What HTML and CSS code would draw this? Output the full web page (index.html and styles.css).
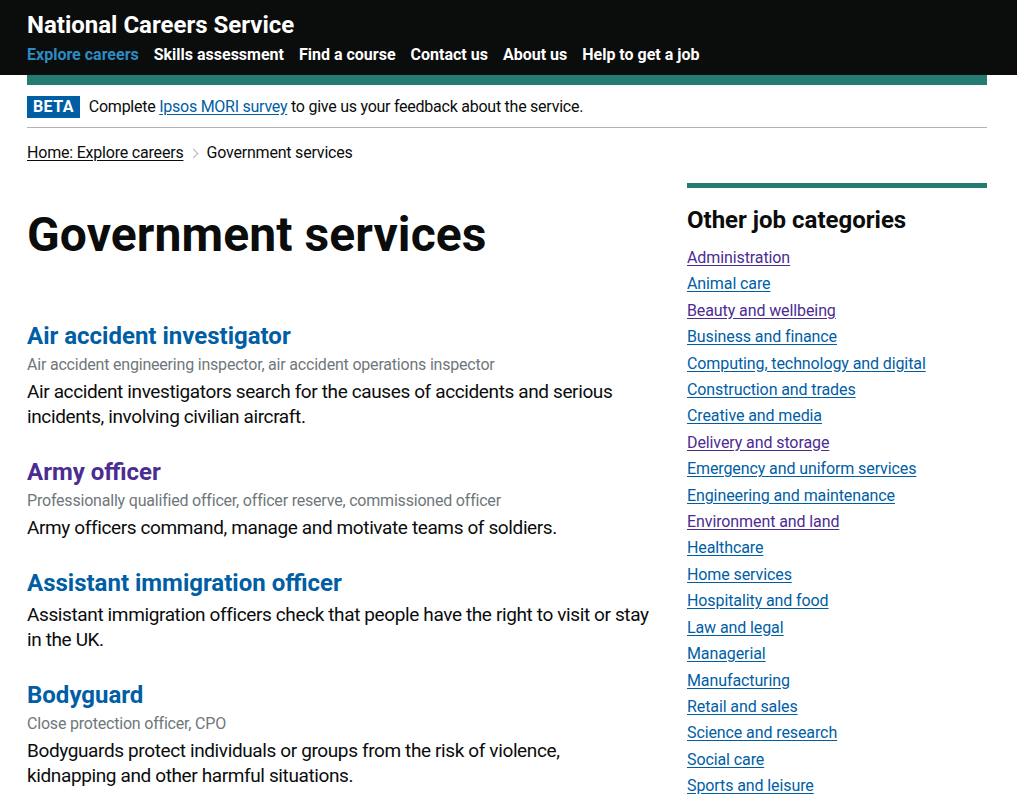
FILE: index.html
```html
<!DOCTYPE html>
<html lang="en">
<head>
<meta charset="utf-8">
<title>Government services - National Careers Service</title>
<link rel="stylesheet" href="styles.css">
</head>
<body>
<header class="site-header">
  <div class="container">
    <a class="service-name" href="#">National Careers Service</a>
    <nav class="nav">
      <a class="nav-link active" href="#">Explore careers</a>
      <a class="nav-link" href="#">Skills assessment</a>
      <a class="nav-link" href="#">Find a course</a>
      <a class="nav-link" href="#">Contact us</a>
      <a class="nav-link" href="#">About us</a>
      <a class="nav-link" href="#">Help to get a job</a>
    </nav>
  </div>
</header>
<div class="container">
  <div class="accent-bar"></div>
  <div class="beta-banner">
    <strong class="tag">BETA</strong>
    <span class="beta-text">Complete <a class="link" href="#">Ipsos MORI survey</a> to give us your feedback about the service.</span>
  </div>
  <div class="breadcrumbs">
    <a class="crumb-link" href="#">Home: Explore careers</a>
    <span class="chevron"></span>
    <span class="crumb-current">Government services</span>
  </div>
  <div class="layout">
    <main class="main">
      <h1 class="page-title">Government services</h1>
      <ul class="jobs">
        <li class="job">
          <h2 class="job-title"><a class="job-link" href="#">Air accident investigator</a></h2>
          <p class="alt-titles">Air accident engineering inspector, air accident operations inspector</p>
          <p class="job-desc">Air accident investigators search for the causes of accidents and serious incidents, involving civilian aircraft.</p>
        </li>
        <li class="job">
          <h2 class="job-title"><a class="job-link visited" href="#">Army officer</a></h2>
          <p class="alt-titles">Professionally qualified officer, officer reserve, commissioned officer</p>
          <p class="job-desc">Army officers command, manage and motivate teams of soldiers.</p>
        </li>
        <li class="job">
          <h2 class="job-title"><a class="job-link" href="#">Assistant immigration officer</a></h2>
          <p class="job-desc">Assistant immigration officers check that people have the right to visit or stay in the UK.</p>
        </li>
        <li class="job">
          <h2 class="job-title"><a class="job-link" href="#">Bodyguard</a></h2>
          <p class="alt-titles">Close protection officer, CPO</p>
          <p class="job-desc">Bodyguards protect individuals or groups from the risk of violence, kidnapping and other harmful situations.</p>
        </li>
      </ul>
    </main>
    <aside class="sidebar">
      <h2 class="side-title">Other job categories</h2>
      <ul class="categories">
        <li><a class="link visited" href="#">Administration</a></li>
        <li><a class="link" href="#">Animal care</a></li>
        <li><a class="link visited" href="#">Beauty and wellbeing</a></li>
        <li><a class="link" href="#">Business and finance</a></li>
        <li><a class="link" href="#">Computing, technology and digital</a></li>
        <li><a class="link" href="#">Construction and trades</a></li>
        <li><a class="link" href="#">Creative and media</a></li>
        <li><a class="link visited" href="#">Delivery and storage</a></li>
        <li><a class="link" href="#">Emergency and uniform services</a></li>
        <li><a class="link" href="#">Engineering and maintenance</a></li>
        <li><a class="link visited" href="#">Environment and land</a></li>
        <li><a class="link" href="#">Healthcare</a></li>
        <li><a class="link" href="#">Home services</a></li>
        <li><a class="link" href="#">Hospitality and food</a></li>
        <li><a class="link" href="#">Law and legal</a></li>
        <li><a class="link" href="#">Managerial</a></li>
        <li><a class="link" href="#">Manufacturing</a></li>
        <li><a class="link" href="#">Retail and sales</a></li>
        <li><a class="link" href="#">Science and research</a></li>
        <li><a class="link" href="#">Social care</a></li>
        <li><a class="link" href="#">Sports and leisure</a></li>
      </ul>
    </aside>
  </div>
</div>
</body>
</html>
```
FILE: styles.css
```css
* { box-sizing: border-box; }
html, body { margin: 0; padding: 0; }
body {
  font-family: Roboto, "Liberation Sans", Arial, sans-serif;
  color: #0b0c0c;
  background: #ffffff;
}
.container {
  width: 960px;
  margin-left: 27px;
}
.site-header {
  background: #0b0c0c;
  height: 75px;
  padding-top: 10px;
}
.service-name {
  display: block;
  color: #ffffff;
  text-decoration: none;
  font-weight: 700;
  font-size: 24px;
  line-height: 30px;
  letter-spacing: 0;
}
.nav {
  display: flex;
  gap: 15px;
  margin-top: 5px;
}
.nav-link {
  color: #ffffff;
  text-decoration: none;
  font-weight: 700;
  font-size: 16px;
  line-height: 20px;
}
.nav-link.active { color: #2b8cc4; }
.accent-bar {
  height: 10px;
  background: #237b71;
}
.beta-banner {
  display: flex;
  align-items: center;
  gap: 9px;
  height: 43px;
  padding-top: 2px;
  border-bottom: 1px solid #b1b4b6;
}
.tag {
  background: #005ea5;
  color: #ffffff;
  font-weight: 700;
  font-size: 16px;
  line-height: 22px;
  padding: 0 6px;
  letter-spacing: 0.4px;
}
.beta-text {
  font-size: 16px;
  line-height: 20px;
  letter-spacing: -0.25px;
}
.link {
  color: #005ea5;
  text-decoration: underline;
  text-underline-offset: 2px;
}
.link.visited { color: #4c2c92; }
.breadcrumbs {
  display: flex;
  align-items: center;
  padding-top: 15px;
  font-size: 16px;
  line-height: 20px;
  letter-spacing: -0.2px;
  margin-bottom: 20px;
}
.crumb-link {
  color: #0b0c0c;
  text-decoration: underline;
  text-underline-offset: 2px;
}
.chevron {
  width: 7px;
  height: 7px;
  border-top: 1px solid #b1b4b6;
  border-right: 1px solid #b1b4b6;
  transform: rotate(45deg);
  margin: 0 9px 0 7px;
}
.layout {
  display: grid;
  grid-template-columns: 630px 300px;
  column-gap: 30px;
  align-items: start;
}
.page-title {
  margin: 27px 0 61px;
  font-size: 48px;
  line-height: 50px;
  font-weight: 700;
  letter-spacing: 0.1px;
}
.jobs {
  list-style: none;
  margin: 0;
  padding: 0;
}
.job { margin-bottom: 28px; }
.job-title {
  margin: 0 0 4px;
  font-size: 24px;
  line-height: 30px;
  font-weight: 700;
}
.job-link {
  color: #005ea5;
  text-decoration: none;
}
.job-link.visited { color: #4c2c92; }
.alt-titles {
  margin: 0 0 4px;
  font-size: 16px;
  line-height: 20px;
  color: #6f777b;
  letter-spacing: -0.2px;
}
.job-desc {
  margin: 0;
  max-width: 624px;
  font-size: 19px;
  line-height: 25px;
  letter-spacing: -0.38px;
}
.sidebar {
  border-top: 5px solid #237b71;
  padding-top: 17px;
}
.side-title {
  margin: 0 0 10px;
  font-size: 24px;
  line-height: 30px;
  font-weight: 700;
}
.categories {
  list-style: none;
  margin: 0;
  padding: 0;
}
.categories li {
  font-size: 16px;
  line-height: 26.4px;
  letter-spacing: -0.1px;
}
```
